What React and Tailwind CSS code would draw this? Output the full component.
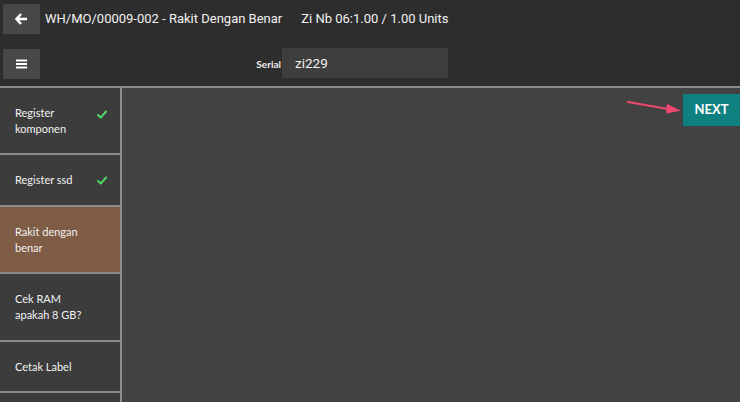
import React from "react";

function Check() {
  return (
    <svg width="10" height="9" viewBox="0 0 10 9" className="shrink-0">
      <path d="M1 5 L3.8 7.6 L9 1.5" fill="none" stroke="#4cd964" strokeWidth="2" strokeLinecap="round" strokeLinejoin="round" />
    </svg>
  );
}

const items = [
  { label: ["Register", "komponen"], done: true, h: "h-[67px]" },
  { label: ["Register ssd"], done: true, h: "h-[52px]" },
  { label: ["Rakit dengan", "benar"], active: true, h: "h-[67px]" },
  { label: ["Cek RAM", "apakah 8 GB?"], h: "h-[68px]" },
  { label: ["Cetak Label"], h: "h-[51px]" },
];

export default function App() {
  return (
    <div className="w-[740px] h-[402px] overflow-hidden flex flex-col bg-[#424242] text-white" style={{ fontFamily: 'Lato, "Open Sans", sans-serif' }}>
      <div className="h-[88px] shrink-0 bg-[#2d2d2d] border-b-2 border-[#8c8c8c] flex flex-col px-[3px] pt-[4px]">
        <div className="flex items-center h-[30px] font-['Roboto',sans-serif]">
          <button className="w-[37px] h-[30px] bg-[#474747] flex items-center justify-center">
            <svg width="13" height="12" viewBox="0 0 13 12">
              <path d="M6 1 L1.5 6 L6 11 M1.8 6 H12" fill="none" stroke="white" strokeWidth="2.6" strokeLinejoin="miter" />
            </svg>
          </button>
          <div className="ml-[5px] text-[13px] text-[#f2f2f2]">WH/MO/00009-002 - Rakit Dengan Benar</div>
          <div className="ml-[19px] text-[13px] text-[#f2f2f2]">Zi Nb 06:1.00 / 1.00 Units</div>
        </div>
        <div className="flex items-center mt-[15px] h-[30px]">
          <button className="w-[37px] h-[30px] bg-[#474747] flex items-center justify-center">
            <svg width="11" height="10" viewBox="0 0 11 10">
              <path d="M0 1.5 H11 M0 5 H11 M0 8.5 H11" stroke="white" strokeWidth="1.8" />
            </svg>
          </button>
          <div className="w-[242px] text-right pr-[1px] text-[10px] font-bold text-[#f0f0f0]">Serial</div>
          <div className="w-[166px] h-[30px] -mt-[2px] bg-[#3e3e3e] flex items-center pl-[13px] text-[13.5px] text-[#f2f2f2] font-['Roboto',sans-serif]">zi229</div>
        </div>
      </div>
      <div className="flex flex-1 min-h-0">
        <div className="w-[122px] shrink-0 border-r-2 border-[#8c8c8c] bg-[#3c3c3c] flex flex-col">
          {items.map((it, i) => (
            <div key={i} className={`${it.h} shrink-0 border-b-2 border-[#8a8a8a] flex items-center justify-between pl-[15px] pr-[13px] ${it.active ? "bg-[#7e5c45]" : "bg-[#3c3c3c]"}`}>
              <div className="text-[11px] leading-[16px] text-[#f2f2f2]">
                {it.label.map((l, j) => (
                  <div key={j}>{l}</div>
                ))}
              </div>
              {it.done && <div className={it.label.length > 1 ? "self-start mt-[22px]" : ""}><Check /></div>}
            </div>
          ))}
        </div>
        <div className="flex-1 relative bg-[#424242]">
          <div className="flex justify-end pt-[6px]">
            <button className="w-[57px] h-[32px] bg-[#0f8080] text-[13px] font-bold text-white">NEXT</button>
          </div>
          <svg className="absolute left-[505px] top-[12px]" width="56" height="14" viewBox="0 0 56 14">
            <path d="M1 2 L44 9.5" stroke="#f0476e" strokeWidth="2" strokeLinecap="round" />
            <path d="M40 4 L54 10.8 L39 13.5 Z" fill="#f0476e" />
          </svg>
        </div>
      </div>
    </div>
  );
}
